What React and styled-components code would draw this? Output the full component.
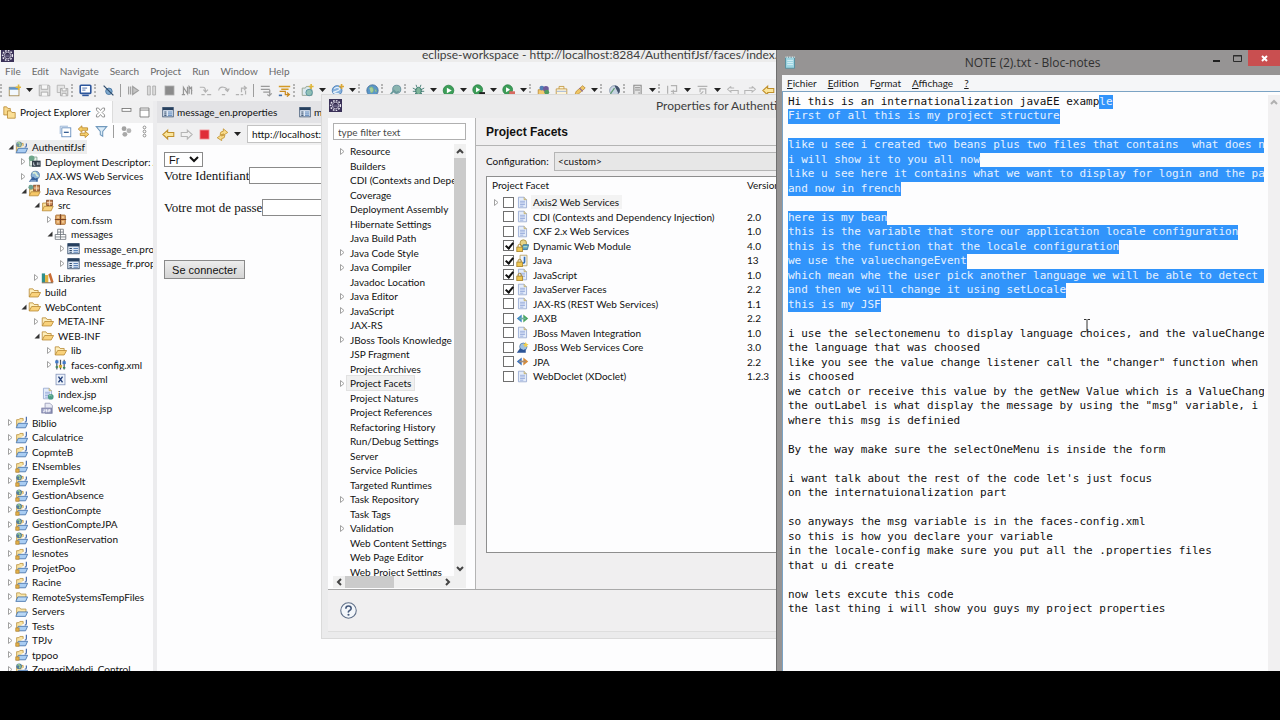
import styled, { createGlobalStyle, css } from "styled-components";

const GlobalStyle = createGlobalStyle`
  * {
    box-sizing: border-box;
  }

  body {
    margin: 0;
    background: #000000;
    font-family: Lato, "Open Sans", sans-serif;
    font-size: 10px;
    color: #111111;
  }

  button,
  input,
  select {
    font-family: inherit;
    font-size: inherit;
    color: inherit;
    margin: 0;
  }
`;

const rowPitch = css`
  height: 14px;
  line-height: 14px;

  &:nth-child(even) {
    height: 15px;
  }
`;

const PageStyled = styled.div`
  min-height: 100vh;
  display: flex;
  flex-direction: column;
  padding: 50px 0 49px;
`;

const DesktopStyled = styled.main`
  flex: 1 1 0;
  min-height: 0;
  display: grid;
  grid-template-columns: minmax(0, 776fr) minmax(0, 504fr);
  grid-template-rows: minmax(0, 1fr);
  overflow: hidden;
`;

/* ---------- icons ---------- */

const IconStyled = styled.svg`
  width: ${({ $size }) => $size || 13}px;
  height: ${({ $size }) => $size || 13}px;
  flex: none;
  display: block;
`;

const page = (
  <>
    <path d="M3 1.500h7l3 3v10H3z" fill="#e4ecfa" stroke="#94a6cf" />
    <path d="M10 1.500v3h3" fill="#f6e7b0" stroke="#b9a76a" />
    <path d="M5 6.500h6M5 8.500h6M5 10.500h6M5 12.500h4" stroke="#8ea4d8" />
  </>
);

const lock = (
  <>
    <path d="M2.500 10V8.500a2 2 0 0 1 4 0V10" fill="none" stroke="#a8842c" strokeWidth="1.200" />
    <rect x="1" y="10" width="7" height="5.500" fill="#efc64f" stroke="#a8842c" />
  </>
);

const projectBase = (
  <>
    <path d="M2 13V4.500h3l1-1.500h4v3" fill="#f8e3a4" stroke="#bd9340" />
    <path d="M1.500 14.500 4 9h11.500l-2.500 5.500z" fill="#a9cdf3" stroke="#3f6ea8" />
  </>
);

const icons = {
  project: (
    <>
      {projectBase}
      <path d="M14 1v4.500q0 2-2 2" fill="none" stroke="#4b6fae" strokeWidth="1.500" />
    </>
  ),
  javaProject: (
    <>
      {projectBase}
      <path d="M14 1v4.500q0 2-2 2" fill="none" stroke="#4b6fae" strokeWidth="1.500" />
      <rect x="1" y="11" width="4" height="4" fill="#e5b34a" stroke="#b98a35" />
    </>
  ),
  webProject: (
    <>
      {projectBase}
      <path d="M14 3v3q0 1.500-2 1.500" fill="none" stroke="#4b6fae" strokeWidth="1.500" />
      <circle cx="5" cy="4" r="3.500" fill="#527d9c" />
      <path d="M3 3q2-2 3 0t-1 3" fill="none" stroke="#9fd08d" strokeWidth="1.500" />
      <rect x="1" y="11" width="4" height="4" fill="#e5b34a" stroke="#b98a35" />
    </>
  ),
  openProject: (
    <>
      {projectBase}
      <path d="M14 3v3q0 1.500-2 1.500" fill="none" stroke="#4b6fae" strokeWidth="1.500" />
      <circle cx="5" cy="4" r="3.500" fill="#6b8f9f" />
      <path d="M3 3q2-2 3 0t-1 3" fill="none" stroke="#a9d69a" strokeWidth="1.500" />
    </>
  ),
  blueFolder: (
    <>
      <path d="M2 13V3.500h4l1 1.500h6.500V9" fill="#fbe7a9" stroke="#b9964b" />
      <path d="M1 14 3.500 8.500H15.500L13 14z" fill="#b9d8f6" stroke="#3f6ea8" />
    </>
  ),
  folder: (
    <>
      <path d="M1.500 13.500v-10h4.500l1.500 2h5v3" fill="#fdeebb" stroke="#b98a35" />
      <path d="M1.500 13.500 4.500 8h11l-3 5.500z" fill="#f9d27c" stroke="#b98a35" />
    </>
  ),
  descriptor: (
    <>
      <path d="M2 2.500h9v11H2z" fill="#e8f2ea" stroke="#7d9c8b" />
      <circle cx="4.500" cy="4" r="3.500" fill="#6fa68a" />
      <rect x="5" y="7" width="10.500" height="7.500" fill="#2f3a46" />
      <path d="M7 9v3.500h2M11.500 9v3.500M13.500 9v3.500" fill="none" stroke="#e6edf2" />
    </>
  ),
  services: (
    <>
      <circle cx="9" cy="6.500" r="5" fill="#8fb6d8" stroke="#4c779f" />
      <path d="M6 4q3-2 4 1t3 2" fill="none" stroke="#d9efd4" strokeWidth="2" />
      <path d="M1 14.500 6 8l3 2.500 3-1v5z" fill="#35619c" />
      <path d="M3 13.500h7" stroke="#dce8f6" />
    </>
  ),
  javaResources: (
    <>
      <path d="M2 14V6h4l1-1h6v4" fill="#fbe2a0" stroke="#b98a35" />
      <path d="M1.500 14.500 4 9.500h11l-2.500 5z" fill="#f6c767" stroke="#b98a35" />
      <rect x="7" y="1.500" width="7" height="7" fill="#c98552" stroke="#7b4423" />
      <path d="M7 5h7M10.500 1.500v7" stroke="#fbe3c6" />
      <circle cx="3.500" cy="4" r="3" fill="#6da18f" />
    </>
  ),
  source: (
    <>
      <path d="M2 14V5h4l1-1.500h6V9" fill="#fbe2a0" stroke="#b98a35" />
      <path d="M1.500 14.500 4 9h11l-2.500 5.500z" fill="#f9d27c" stroke="#b98a35" />
      <rect x="7" y="1.500" width="7" height="6.500" fill="#c98552" stroke="#7b4423" />
      <path d="M7 4.500h7M10.500 1.500V8" stroke="#fbe3c6" />
    </>
  ),
  pack: (
    <>
      <rect x="2" y="2.500" width="12" height="11.500" rx="1" fill="#e3a968" stroke="#a06a35" />
      <path d="M8 1.500v13M1 8h14" stroke="#7b4423" strokeWidth="1.500" />
      <path d="M4 5h2M10 5h2M4 11h2M10 11h2" stroke="#f7dcb5" strokeWidth="1.500" />
    </>
  ),
  emptyPack: (
    <>
      <path d="M4.500 8V1.500h7V8M1.500 8h13v6h-13zM8 1.500V14M1.500 11h13M4.500 5h7" fill="#ffffff" stroke="#6d727a" />
    </>
  ),
  properties: (
    <>
      <rect x="1" y="2" width="14" height="12.500" fill="#dfe9f6" stroke="#2e4766" />
      <rect x="1" y="2" width="14" height="3.500" fill="#27405f" />
      <path d="M3 8h3M3 10.500h3M3 12.500h3" stroke="#2e4766" strokeWidth="1.300" />
      <path d="M8 8h5.500M8 10.500h5.500M8 12.500h5.500" stroke="#5c84b8" strokeWidth="1.300" />
    </>
  ),
  libraries: (
    <>
      <rect x="1" y="3" width="4" height="11" fill="#2f8f8c" />
      <rect x="5" y="5" width="4" height="9" fill="#e0b13c" />
      <path d="m9 4 3-1.500 3.500 11-3 1z" fill="#c96c34" />
      <path d="M1 14.500h14" stroke="#5c4a30" />
    </>
  ),
  config: (
    <>
      <path d="M3.500 2v12M8 2v12M12.500 2v12" stroke="#4a5361" strokeWidth="1.500" />
      <rect x="1.500" y="3" width="4" height="3.500" fill="#3f79c9" />
      <rect x="6" y="8.500" width="4" height="3.500" fill="#d8b135" />
      <rect x="10.500" y="4" width="4" height="3.500" fill="#3f79c9" />
      <path d="M2 11h3M11 12h3" stroke="#3a8b55" strokeWidth="2" />
    </>
  ),
  xml: (
    <>
      <rect x="2.500" y="1.500" width="11" height="13" fill="#eef3fb" stroke="#8495ba" />
      <path d="m5.500 4.500 5 7M10.500 4.500l-5 7" stroke="#27437c" strokeWidth="1.800" />
    </>
  ),
  indexPage: (
    <>
      {page}
      <circle cx="12" cy="12" r="3.500" fill="#4c9c86" />
      <path d="M10 11q2-2 3 0" fill="none" stroke="#bfe3c9" />
    </>
  ),
  jspPage: (
    <>
      <path d="M5 7V1.500h6l3 3V14H5" fill="#e8eaf4" stroke="#9498b5" />
      <rect x="1" y="7.500" width="12" height="6" fill="#a7aacb" stroke="#73779f" />
      <path d="M4 9v3H2.500M7.500 9.500H6v1h1.500v1.500H6M9.500 12.500V9.500H11V11H9.500" fill="none" stroke="#ffffff" />
    </>
  ),
  page,
  lockedPage: (
    <>
      {page}
      {lock}
    </>
  ),
  lockedWeb: (
    <>
      <circle cx="9" cy="5" r="4" fill="#e9d486" stroke="#a58d3d" />
      <path d="M7 11 9 7h6.500L14 13H7z" fill="#5ea1c4" stroke="#35708f" />
      <path d="M9 9.500h5" stroke="#b6e0bd" strokeWidth="1.500" />
      {lock}
    </>
  ),
  lockedJava: (
    <>
      <path d="M5 1.500h8.500v13H5z" fill="#eff4fc" stroke="#b59c55" />
      <path d="M10.500 3.500v6q0 2-2.500 1.500" fill="none" stroke="#2f6bb5" strokeWidth="2" />
      {lock}
    </>
  ),
  jaxb: (
    <>
      <path d="M7 3v10L1 8z" fill="#3f86c6" />
      <path d="M9 3v10L15 8z" fill="#47a45b" />
      <path d="M4 8h8" stroke="#6fb0a0" strokeWidth="2" />
    </>
  ),
  jpa: (
    <>
      <path d="M7 3v10L1 8z" fill="#3c72ba" />
      <path d="M9 3v10L15 8z" fill="#d98a35" />
      <path d="M4 8h8" stroke="#a58f7a" strokeWidth="2" />
    </>
  ),
  boss: (
    <>
      <circle cx="9" cy="7" r="4.500" fill="#9fc1e0" stroke="#5a83ad" />
      <path d="M1 14.500 5 9l4 2 3-1v4.500z" fill="#2c5497" />
      <path d="m12 1 1 2.500 2.500.5-2 1.500.5 2.500-2-1.500-2 1.500.5-2.500-2-1.500 2.500-.5z" fill="#f2cf4a" />
    </>
  ),
  explorer: (
    <>
      <path d="M1 11V1h3.500l1.500 2H9v8z" fill="#f8d98c" stroke="#b98a35" />
      <path d="M5.500 15V6h4l1.500 2h4v7z" fill="#fbdf96" stroke="#b98a35" />
    </>
  ),
  eclipse: (
    <>
      <rect width="16" height="16" fill="#3a3158" />
      <circle cx="8" cy="8" r="6" fill="none" stroke="#e9e6f0" strokeWidth="1.800" strokeDasharray="2 1.500" />
      <circle cx="8" cy="8" r="4" fill="#2a2145" stroke="#d6d2e2" />
      <path d="M5 7.500h6M5 9.500h6" stroke="#8d86aa" />
    </>
  ),
  newWizard: (
    <>
      <rect x="1.500" y="4" width="12" height="10.500" fill="#f3f8fd" stroke="#a08448" />
      <rect x="1.500" y="4" width="11" height="3" fill="#5f95c9" />
      <path d="M13 .5v7M9.500 4h6.500" stroke="#e0b73c" strokeWidth="2" />
    </>
  ),
  save: (
    <>
      <path d="M1.500 1.500h12l1 1v12h-13z" fill="#e1e1e1" stroke="#a3a3a3" />
      <path d="M4 1.500v5h8v-5M4 14.500V10h8v4.500" fill="#f7f7f7" stroke="#a3a3a3" />
    </>
  ),
  saveAll: (
    <>
      <path d="M1.500 1.500h9v9h-9z" fill="#e6e6e6" stroke="#b0b0b0" />
      <path d="M5.500 5.500h9v9h-9z" fill="#e1e1e1" stroke="#a3a3a3" />
      <path d="M7.500 5.500v3h5v-3M7.500 14.500v-3h5v3" fill="#f7f7f7" stroke="#a3a3a3" />
    </>
  ),
  console: (
    <>
      <rect x="1.500" y="1.500" width="13" height="10" rx="1" fill="#ffffff" stroke="#2d569c" strokeWidth="2" />
      <path d="M4 5h6M4 7.500h4" stroke="#2d569c" />
      <path d="M4 14h8" stroke="#2d569c" strokeWidth="2" />
    </>
  ),
  skip: (
    <>
      <circle cx="8.500" cy="9" r="4" fill="#7fa9ce" stroke="#3f6f9c" />
      <path d="m2 2 12 12" stroke="#2f4c6b" strokeWidth="1.500" />
    </>
  ),
  resume: <path d="M2 3v10M4.500 3v10M7 3l7 5-7 5z" fill="#c4c4c4" stroke="#a0a0a0" strokeWidth="1.500" />,
  pause: <path d="M3 2.500h3.500v11H3zM9.500 2.500H13v11H9.500z" fill="#dcdcdc" stroke="#a8a8a8" />,
  stop: <rect x="2.500" y="2.500" width="11" height="11" fill="#8b8b8b" stroke="#a9a9a9" />,
  disconnect: <path d="M3 13V4l5 8V3.500M10 12V3l4 5M13 3v10M1 13h4" fill="none" stroke="#979797" strokeWidth="1.500" />,
  stepInto: <path d="M1 4h4q3 0 3 5M5.500 7 8 10l3-3M3 13h4M10 13h5" fill="none" stroke="#b2b2b2" strokeWidth="1.500" />,
  stepOver: <path d="M2 8q1-5 6-4t5 4M10 6.500 13 9l2-3.500M6 13h4" fill="none" stroke="#b2b2b2" strokeWidth="1.500" />,
  stepReturn: <path d="M1 13h4M7 13h3M8 10V5h5M11 2.500 14 5l-3 2.500M13 8v5" fill="none" stroke="#b2b2b2" strokeWidth="1.500" />,
  lines: <path d="M1 3h11M1 6.500h11M4 10h8M9 13l3 2M12 7v7l2.500-2.500" fill="none" stroke="#9a9a9a" strokeWidth="1.500" />,
  filters: (
    <>
      <path d="M1 3h14M4 6.500h9" stroke="#d49a26" strokeWidth="2" />
      <path d="M2 9h7v4h4M11 10.500l3 2.500-3 2.500" fill="none" stroke="#c98a20" strokeWidth="1.500" />
      <path d="M1 14h4" stroke="#3f6fae" strokeWidth="2" />
    </>
  ),
  newWeb: (
    <>
      <path d="M1.500 14V5h4l1-2h5v4h2v7z" fill="#dce9ee" stroke="#8d9c88" />
      <circle cx="10" cy="10.500" r="4" fill="#8fc0b5" stroke="#4f8a9b" />
      <path d="M12.500 0v6M9.500 3h6" stroke="#e0b73c" strokeWidth="2" />
    </>
  ),
  newService: (
    <>
      <circle cx="7.500" cy="8" r="6" fill="#86b1dc" stroke="#4177b4" />
      <path d="M4 6q3-3 6-1T6 9t4 3" fill="none" stroke="#e8f2fb" strokeWidth="1.500" />
      <path d="M13 0v6M10 3h6" stroke="#dba736" strokeWidth="2" />
    </>
  ),
  globe: (
    <>
      <circle cx="8" cy="8" r="7" fill="#5b97c9" stroke="#456f97" />
      <path d="M4 5q4-3 5 1t-3 5M11 6q3 2 1 4" fill="#a8cf9a" stroke="#7fb376" />
    </>
  ),
  webSearch: (
    <>
      <circle cx="9.500" cy="6.500" r="5" fill="#8ab5b0" stroke="#5c8898" />
      <path d="m1 14 5-6 3 3 3-2" fill="none" stroke="#6a9a9b" strokeWidth="2" />
    </>
  ),
  debug: (
    <>
      <ellipse cx="8" cy="8.500" rx="3.500" ry="4.500" fill="#7fb59a" stroke="#2f6f65" />
      <path d="M1 5l4 2M1 9h4M2 14l3-3M15 5l-4 2M15 9h-4M14 14l-3-3M6 4 5 1M10 4l1-3" stroke="#2f6f65" />
    </>
  ),
  run: (
    <>
      <circle cx="8" cy="8" r="6.500" fill="#3c9e58" stroke="#2a8145" />
      <path d="M6 4.500v7L12 8z" fill="#ffffff" />
    </>
  ),
  coverage: (
    <>
      <circle cx="7" cy="7" r="6" fill="#3c9e58" stroke="#2a8145" />
      <path d="M5 4v6l5-3z" fill="#ffffff" />
      <rect x="9" y="10" width="7" height="2.500" fill="#1f1f1f" />
    </>
  ),
  external: (
    <>
      <circle cx="7" cy="7" r="6" fill="#3c9e58" stroke="#2a8145" />
      <path d="M5 4v6l5-3z" fill="#ffffff" />
      <rect x="9" y="9" width="7" height="5" fill="#d86a60" />
    </>
  ),
  team: (
    <>
      <path d="M1.500 14V7h5l1-2h5v9z" fill="#f4c96f" stroke="#b98a35" />
      <circle cx="6" cy="5" r="3" fill="#527fb6" />
      <circle cx="11" cy="6" r="3.500" fill="#6e5a9c" />
      <circle cx="12" cy="10" r="3" fill="#4f9a5f" />
    </>
  ),
  bag: (
    <>
      <path d="M1.500 6h13v8h-13zM5 6V3h6v3" fill="#fdf4da" stroke="#c09238" />
      <path d="M2 9h12" stroke="#8aa6d8" />
    </>
  ),
  pencil: (
    <>
      <path d="m2 14 2-5 8-7 3 3-8 7z" fill="#f0c766" stroke="#b98a35" />
      <path d="m8 5 4 4" stroke="#8a6a9b" strokeWidth="1.500" />
    </>
  ),
  open: (
    <>
      <circle cx="8" cy="8" r="6" fill="#c7d3e2" stroke="#7d8fa8" />
      <path d="M8 2a6 6 0 0 1 5 10z" fill="#44546d" />
      <path d="M3 12 8 5" stroke="#5b9a6c" strokeWidth="1.500" />
    </>
  ),
  server: <path d="M3.500 1.500h9v13h-9zM5 4.500h6M5 7.500h6M9 11h2" fill="#e3e3e3" stroke="#8d8d8d" strokeWidth="1.300" />,
  nextMark: <path d="M2 2v10M6 2h7v7H6M9 7v7M6.500 12 9 14.500 11.500 12" fill="none" stroke="#b2b2b2" strokeWidth="1.500" />,
  prevMark: <path d="M2 3h12M12 14V6H6M4 14l5-5M9 6 5 6v4" fill="none" stroke="#b2b2b2" strokeWidth="1.500" />,
  backGrey: <path d="M6 3 2 6.500 6 10V8h9v5M6 3v2h4" fill="none" stroke="#b5b5b5" strokeWidth="1.300" />,
  nextGrey: <path d="m10 3 4 3.500-4 3.500V8H1v5M10 3v2H6" fill="none" stroke="#b5b5b5" strokeWidth="1.300" />,
  back: <path d="M7 2.500 1 8l6 5.500V10.500h7.500v-5H7z" fill="#fbe59b" stroke="#c0902c" strokeWidth="1.300" />,
  forward: <path d="m9 2.500 6 5.500-6 5.500V10.500H1.500v-5H9z" fill="#f1f1f1" stroke="#b5b5b5" strokeWidth="1.300" />,
  redStop: <rect x="2.500" y="2.500" width="11" height="11" fill="#e02d38" stroke="#ef8288" />,
  refresh: (
    <>
      <path d="M5 8q0-4 4-4V1l5.500 4.500L9 9V7Q8 7 8 9z" fill="#f9dc8c" stroke="#c0902c" />
      <path d="M11 9q0 4-4 4v2.500L1.500 12 7 8v2q1 0 1-1z" fill="#f9dc8c" stroke="#c0902c" />
    </>
  ),
  collapse: (
    <>
      <path d="M1.500 11V1.500H11" fill="none" stroke="#86a8cf" />
      <rect x="3.500" y="3.500" width="11" height="11" fill="#ffffff" stroke="#5884b8" />
      <path d="M6 9h6" stroke="#27528a" strokeWidth="1.500" />
    </>
  ),
  link: (
    <>
      <path d="M6 1 1.500 5 6 9V6.500h7v-3H6z" fill="#f6cf69" stroke="#b98425" />
      <path d="m10 7.500 4.500 4L10 15.500V13H4v-3h6z" fill="#f6cf69" stroke="#b98425" />
    </>
  ),
  funnel: <path d="M1.500 2h13L9.500 8v6l-3-2V8z" fill="#dcecf8" stroke="#7199bd" strokeWidth="1.300" />,
  focus: (
    <>
      <circle cx="5" cy="4.500" r="3" fill="#a2a2a2" />
      <circle cx="11" cy="7" r="3" fill="#b5b5b5" />
      <circle cx="6" cy="11.500" r="3" fill="#a9a9a9" />
    </>
  ),
  more: (
    <>
      <circle cx="8" cy="3" r="1.700" fill="#ffffff" stroke="#7b7b7b" />
      <circle cx="8" cy="8" r="1.700" fill="#ffffff" stroke="#7b7b7b" />
      <circle cx="8" cy="13" r="1.700" fill="#ffffff" stroke="#7b7b7b" />
    </>
  ),
  closeTab: <path d="M3 2.500h2.500L8 5.500l2.500-3H13v2.500L10 8l3 3v2.500h-2.500L8 10.500l-2.500 3H3V11l3-3-3-3z" fill="#ffffff" stroke="#7d7d7d" />,
  minimize: <rect x="2.500" y="3" width="11" height="3.500" fill="#ffffff" stroke="#6d6d6d" />,
  maximize: <path d="M2.500 2.500h11v11h-11zM2.500 5h11" fill="#ffffff" stroke="#6d6d6d" />,
  notepad: (
    <>
      <rect x="2" y="2" width="11" height="13" fill="#9fd6e3" stroke="#4d8a9b" />
      <path d="M2 1.500h11" stroke="#e9f6f8" strokeWidth="2" strokeDasharray="1 1" />
      <path d="M4 5.500h7M4 8h7M4 10.500h7" stroke="#dcf3f7" />
    </>
  ),
  help: (
    <>
      <circle cx="8" cy="8" r="7.300" fill="#f3f6fa" stroke="#5f6f88" />
      <path d="M5.500 6.300q0-2.500 2.500-2.500t2.500 2.200q0 1.200-1.500 2T8 10" fill="none" stroke="#44587a" strokeWidth="1.500" />
      <circle cx="8" cy="12" r="1" fill="#44587a" />
    </>
  ),
};

const Icon = ({ name, size }) => (
  <IconStyled viewBox="0 0 16 16" $size={size} aria-hidden="true">
    {icons[name]}
  </IconStyled>
);

const TwistyStyled = styled.span`
  width: 9px;
  flex: none;
  display: flex;
  align-items: center;
  justify-content: center;
`;

const Twisty = ({ state }) => (
  <TwistyStyled>
    {state === "closed" && (
      <svg width="5" height="7" viewBox="0 0 5 7">
        <path d="M.5.5 4 3.500.5 6.500z" fill="#ffffff" stroke="#a2a2a2" />
      </svg>
    )}
    {state === "open" && (
      <svg width="6" height="6" viewBox="0 0 6 6">
        <path d="M5.500.5v5h-5z" fill="#333333" />
      </svg>
    )}
  </TwistyStyled>
);

/* ---------- workbench ---------- */

const WorkbenchStyled = styled.section`
  position: relative;
  display: flex;
  flex-direction: column;
  min-width: 0;
  background: #ececee;
  overflow: hidden;
`;

const WorkbenchTitleStyled = styled.header`
  height: 12px;
  flex: none;
  display: flex;
  align-items: flex-end;
  background: #ececec;
  overflow: hidden;
`;

const AppIconStyled = styled.span`
  width: 422px;
  padding-left: 1px;
  flex: none;
`;

const WindowTitleStyled = styled.h1`
  margin: 0;
  font-size: 12px;
  line-height: 14px;
  font-weight: 400;
  color: #3d3d3d;
  white-space: nowrap;
`;

const MenuBarStyled = styled.nav`
  display: flex;
  align-items: center;
  gap: 11px;
  height: ${({ $height }) => $height}px;
  flex: none;
  padding: 0 5px;
  background: #f5f6f8;
  color: ${({ $color }) => $color};
`;

const MenuButtonStyled = styled.button`
  border: 0;
  padding: 0;
  background: none;
  line-height: 14px;
`;

const ToolBarStyled = styled.div`
  display: flex;
  align-items: center;
  height: 22px;
  flex: none;
  background: #f1f1f2;
  overflow: hidden;
`;

const ToolButtonStyled = styled.button`
  width: ${({ $width }) => $width || 18}px;
  height: 18px;
  flex: none;
  border: 0;
  padding: 0;
  background: none;
  display: flex;
  align-items: center;
  justify-content: center;
`;

const GripStyled = styled.span`
  width: 5px;
  height: 13px;
  flex: none;
  border-left: 2px dotted #b4b4b4;
`;

const SeparatorStyled = styled.span`
  width: 1px;
  height: 13px;
  margin: 0 3px;
  flex: none;
  background: #9d9d9d;
`;

const WorkAreaStyled = styled.div`
  flex: 1;
  min-height: 0;
  display: flex;
  gap: 4px;
`;

const ExplorerStyled = styled.aside`
  width: 153px;
  flex: none;
  display: flex;
  flex-direction: column;
  background: #fdfdfe;
  overflow: hidden;
`;

const TabStripStyled = styled.div`
  height: 22px;
  flex: none;
  display: flex;
  align-items: center;
  background: ${({ $background }) => $background};
  white-space: nowrap;
  overflow: hidden;
`;

const ViewTabStyled = styled.div`
  height: 100%;
  display: flex;
  align-items: center;
  gap: 4px;
  padding: 0 5px 0 3px;
  background: #fdfdfe;
  border-right: 1px solid #dcdcdc;
`;

const ViewControlsStyled = styled.div`
  flex: 1;
  display: flex;
  justify-content: flex-end;
`;

const ViewToolBarStyled = styled.div`
  height: 17px;
  flex: none;
  display: flex;
  align-items: center;
  justify-content: flex-end;
`;

const TreeStyled = styled.ul`
  margin: 0;
  padding: 0;
  list-style: none;
  flex: 1;
  min-height: 0;
  overflow: hidden;
`;

const TreeItemStyled = styled.li`
  ${rowPitch}
  display: flex;
  align-items: center;
  padding-left: ${({ $level }) => 6 + $level * 13}px;
  white-space: nowrap;
`;

const TreeLabelStyled = styled.span`
  display: flex;
  align-items: center;
  gap: 4px;
  padding-right: 2px;
  background: ${({ $selected }) => ($selected ? "#ededed" : "none")};
`;

const EditorStyled = styled.section`
  flex: 1;
  min-width: 0;
  display: flex;
  flex-direction: column;
  background: #fdfdfe;
`;

const EditorTabStyled = styled.div`
  display: flex;
  align-items: center;
  gap: 3px;
  flex: none;
  width: 137px;
  padding-left: 5px;
`;

const BrowserBarStyled = styled.div`
  height: 22px;
  flex: none;
  display: flex;
  align-items: center;
  padding-left: 2px;
  background: #f0f0f1;
`;

const AddressStyled = styled.input`
  flex: 1;
  min-width: 0;
  height: 18px;
  margin-left: 4px;
  border: 1px solid #c3c3c3;
  padding: 0 4px;
  background: #ffffff;
`;

const FormStyled = styled.form`
  display: flex;
  flex-direction: column;
  align-items: flex-start;
  padding: 7px 0 0 7px;
  font-family: "Liberation Serif", serif;
  font-size: 13px;
  overflow: hidden;
`;

const LanguageSelectStyled = styled.select`
  width: 39px;
  height: 15px;
  padding: 0;
  border: 1px solid #8a8a8a;
  background: #ffffff;
  font-family: "Liberation Sans", sans-serif;
  font-size: 11px;
`;

const FieldStyled = styled.div`
  display: flex;
  align-items: center;
  height: 17px;
  margin-bottom: ${({ $gap }) => $gap}px;

  input {
    width: 130px;
    height: 17px;
    border: 1px solid #8a8a8a;
    background: #ffffff;
  }
`;

const SubmitStyled = styled.button`
  width: 81px;
  height: 19px;
  padding: 0;
  border: 1px solid #8a8a8a;
  background: linear-gradient(#ededed, #d4d4d4);
  font-family: "Liberation Sans", sans-serif;
  font-size: 11px;
`;

/* ---------- properties dialog, floats over the workbench ---------- */

const DialogStyled = styled.section`
  position: absolute;
  top: 44px;
  right: 0;
  bottom: 32px;
  left: 321px;
  display: flex;
  flex-direction: column;
  padding: 0 0 6px 6px;
  background: #ebebec;
  border: solid #dadada;
  border-width: 1px 0 1px 1px;
  overflow: hidden;
`;

const DialogTitleStyled = styled.header`
  height: 23px;
  flex: none;
  display: flex;
  align-items: center;
  padding: 0 0 2px 1px;

  h2 {
    margin: 0 0 0 314px;
    font-size: 12px;
    line-height: 16px;
    font-weight: 400;
    color: #3d3d3d;
    white-space: nowrap;
  }
`;

const DialogBodyStyled = styled.div`
  flex: 1;
  min-height: 0;
  display: flex;
  background: #f0eff0;
  border-bottom: 1px solid #a9a9a9;
`;

const CategoriesStyled = styled.div`
  width: 148px;
  flex: none;
  display: flex;
  flex-direction: column;
  padding: 5px 9px 1px 5px;
  border-right: 1px solid #b4b4b4;
  background: #fdfdfe;
`;

const FilterStyled = styled.input`
  width: 100%;
  height: 17px;
  flex: none;
  padding: 0 4px;
  border: 1px solid #b0b0b0;
  background: #ffffff;

  &::placeholder {
    color: #4a4a4a;
  }
`;

const CategoryAreaStyled = styled.div`
  flex: 1;
  min-height: 0;
  display: flex;
  margin-top: 4px;
`;

const CategoryListStyled = styled.div`
  flex: 1;
  min-width: 0;
  display: flex;
  flex-direction: column;
`;

const CategoryStyled = styled.li`
  ${rowPitch}
  display: flex;
  align-items: center;
  padding-left: 5px;
  white-space: nowrap;

  span:last-child {
    padding: 0 3px;
    background: ${({ $selected }) => ($selected ? "#f0f0f0" : "none")};
    outline: ${({ $selected }) => ($selected ? "1px solid #e2e2e2" : "none")};
  }
`;

const VerticalScrollStyled = styled.div`
  width: 12px;
  flex: none;
  display: flex;
  flex-direction: column;
  align-items: center;
  background: ${({ $background }) => $background || "#f0f0f0"};
  padding-bottom: ${({ $end }) => $end || 0}px;
`;

const HorizontalScrollStyled = styled.div`
  height: 12px;
  flex: none;
  display: flex;
  align-items: center;
  background: #f0f0f0;
`;

const ScrollThumbStyled = styled.span`
  background: #cbcbcb;
  flex: ${({ $grow }) => $grow};
  align-self: stretch;
`;

const ScrollTrackStyled = styled.span`
  flex: ${({ $grow }) => $grow};
`;

const ScrollButtonStyled = styled.button`
  width: 12px;
  height: 14px;
  flex: none;
  border: 0;
  padding: 0;
  background: none;
  display: flex;
  align-items: center;
  justify-content: center;
`;

const arrows = {
  up: "m1 6 3-3 3 3",
  down: "m1 2 3 3 3-3",
  left: "M6 1 3 4l3 3",
  right: "m2 1 3 3-3 3",
};

const ScrollButton = ({ direction, color = "#444444" }) => (
  <ScrollButtonStyled type="button" aria-label={`Scroll ${direction}`}>
    <svg width="8" height="8" viewBox="0 0 8 8">
      <path d={arrows[direction]} fill="none" stroke={color} strokeWidth="2" />
    </svg>
  </ScrollButtonStyled>
);

const FacetsStyled = styled.div`
  flex: 1;
  min-width: 0;
  display: flex;
  flex-direction: column;

  h3 {
    margin: 0;
    height: 28px;
    flex: none;
    padding-left: 10px;
    border-bottom: 1px solid #b4b4b4;
    font-family: "Liberation Sans", sans-serif;
    font-size: 12px;
    line-height: 28px;
    color: #111111;
  }
`;

const ConfigurationStyled = styled.div`
  display: flex;
  align-items: center;
  height: 30px;
  flex: none;
  padding-left: 10px;

  label {
    width: 68px;
    flex: none;
  }

  select {
    flex: 1;
    min-width: 0;
    height: 19px;
    appearance: none;
    padding: 0 3px;
    border: 1px solid #b5b5b5;
    border-right: 0;
    border-radius: 0;
    background: #e7e7e7;
  }
`;

const FacetBoxStyled = styled.div`
  flex: 1;
  min-height: 0;
  margin: 0 0 36px 10px;
  border: 1px solid #8e8e8e;
  border-right: 0;
  background: #fdfdfe;
  overflow: hidden;
`;

const FacetTableStyled = styled.table`
  width: 100%;
  table-layout: fixed;
  border-collapse: collapse;

  th {
    height: 18px;
    padding: 0 0 2px 5px;
    font-weight: 400;
    text-align: left;
  }

  th:last-child {
    width: 34px;
  }

  td {
    padding: 0 0 0 5px;
    white-space: nowrap;
  }
`;

const FacetRowStyled = styled.tr`
  ${rowPitch}
`;

const FacetCellStyled = styled.div`
  height: 14px;
  display: flex;
  align-items: center;
  gap: 2px;

  label {
    padding: 0 3px 0 2px;
    background: ${({ $selected }) => ($selected ? "#f3f3f3" : "none")};
  }
`;

const CheckboxStyled = styled.input`
  appearance: none;
  position: relative;
  width: 11px;
  height: 11px;
  flex: none;
  border: 1px solid #6f6f6f;
  background: #ffffff;

  &:checked::after {
    content: "";
    position: absolute;
    left: 3px;
    top: 0;
    width: 3px;
    height: 6px;
    border: solid #111111;
    border-width: 0 2px 2px 0;
    transform: rotate(40deg);
  }
`;

const DialogFooterStyled = styled.footer`
  height: 42px;
  flex: none;
  display: flex;
  align-items: center;
  padding-left: 11px;
  background: #f0eff0;
  border-bottom: 1px solid #dedede;
`;

/* ---------- notepad ---------- */

const NotepadStyled = styled.section`
  position: relative;
  display: flex;
  flex-direction: column;
  min-width: 0;
  padding-left: 5px;
  background: #969494;
  border-left: 1px solid #6f6f6f;
  overflow: hidden;
`;

const NotepadTitleStyled = styled.header`
  height: 25px;
  flex: none;
  display: flex;
  align-items: center;
  padding-left: 2px;

  h2 {
    flex: 1;
    margin: 0;
    padding-left: 62px;
    font-family: "Open Sans", sans-serif;
    font-size: 12px;
    line-height: 16px;
    font-weight: 400;
    color: #303030;
    text-align: center;
  }
`;

const WindowButtonStyled = styled.button`
  width: ${({ $width }) => $width}px;
  height: 16px;
  align-self: flex-start;
  border: 0;
  padding: 0;
  display: flex;
  align-items: center;
  justify-content: center;
  background: ${({ $danger }) => ($danger ? "#c94f50" : "none")};
`;

const NotepadBodyStyled = styled.div`
  flex: 1;
  min-height: 0;
  display: flex;
  gap: 4px;
  padding: 3px 0 0 5px;
  background: #fdfdfe;
  border-top: 1px solid #7ba3c4;
  border-left: 1px solid #7ba3c4;
`;

const NoteStyled = styled.div`
  flex: 1;
  min-width: 0;
  overflow: hidden;
  font-family: "DejaVu Sans Mono", monospace;
  font-size: 11px;
  white-space: pre;
`;

const NoteLineStyled = styled.div`
  ${rowPitch}

  mark {
    display: inline-block;
    height: 100%;
    background: #3194fb;
    color: #e6f1ff;
  }
`;

const CursorStyled = styled.svg`
  position: absolute;
  top: 269px;
  left: 306px;
`;

/* ---------- content ---------- */

const menus = ["File", "Edit", "Navigate", "Search", "Project", "Run", "Window", "Help"];

const tools = [
  "|", "newWizard", "v", "save", "saveAll", "|", "console", "|", "skip", "/",
  "resume", "pause", "stop", "disconnect", "stepInto", "stepOver", "stepReturn", "/",
  "lines", "filters", "|", "newWeb", "v", "newService", "v", "|", "globe", "|",
  "webSearch", "|", "debug", "v", "run", "v", "coverage", "v", "external", "v", "|",
  "team", "bag", "pencil", "v", "|", "open", "|", "server", "v", "|",
  "nextMark", "v", "prevMark", "v", "backGrey", "nextGrey", "back",
];

const tree = [
  [0, "open", "openProject", "AuthentifJsf"],
  [1, "closed", "descriptor", "Deployment Descriptor: AuthentifJsf"],
  [1, "closed", "services", "JAX-WS Web Services"],
  [1, "open", "javaResources", "Java Resources"],
  [2, "open", "source", "src"],
  [3, "closed", "pack", "com.fssm"],
  [3, "open", "emptyPack", "messages"],
  [4, "closed", "properties", "message_en.properties"],
  [4, "closed", "properties", "message_fr.properties"],
  [2, "closed", "libraries", "Libraries"],
  [1, "", "folder", "build"],
  [1, "open", "folder", "WebContent"],
  [2, "closed", "folder", "META-INF"],
  [2, "open", "folder", "WEB-INF"],
  [3, "closed", "folder", "lib"],
  [3, "closed", "config", "faces-config.xml"],
  [3, "", "xml", "web.xml"],
  [2, "", "indexPage", "index.jsp"],
  [2, "", "jspPage", "welcome.jsp"],
  [0, "closed", "project", "Biblio"],
  [0, "closed", "project", "Calculatrice"],
  [0, "closed", "project", "CopmteB"],
  [0, "closed", "javaProject", "ENsembles"],
  [0, "closed", "webProject", "ExempleSvlt"],
  [0, "closed", "webProject", "GestionAbsence"],
  [0, "closed", "webProject", "GestionCompte"],
  [0, "closed", "webProject", "GestionCompteJPA"],
  [0, "closed", "webProject", "GestionReservation"],
  [0, "closed", "javaProject", "lesnotes"],
  [0, "closed", "javaProject", "ProjetPoo"],
  [0, "closed", "javaProject", "Racine"],
  [0, "closed", "blueFolder", "RemoteSystemsTempFiles"],
  [0, "closed", "blueFolder", "Servers"],
  [0, "closed", "javaProject", "Tests"],
  [0, "closed", "javaProject", "TPJv"],
  [0, "closed", "javaProject", "tppoo"],
  [0, "closed", "webProject", "ZougariMehdi_Control"],
];

const categories = [
  "+Resource", "Builders", "CDI (Contexts and Dependency Injection)", "Coverage",
  "Deployment Assembly", "Hibernate Settings", "Java Build Path", "+Java Code Style",
  "+Java Compiler", "Javadoc Location", "+Java Editor", "+JavaScript", "JAX-RS",
  "+JBoss Tools Knowledge Base", "JSP Fragment", "Project Archives", "+Project Facets",
  "Project Natures", "Project References", "Refactoring History", "Run/Debug Settings",
  "Server", "Service Policies", "Targeted Runtimes", "+Task Repository", "Task Tags",
  "+Validation", "Web Content Settings", "Web Page Editor", "Web Project Settings",
];

const facets = [
  ["Axis2 Web Services", "", false, "page"],
  ["CDI (Contexts and Dependency Injection)", "2.0", false, "page"],
  ["CXF 2.x Web Services", "1.0", false, "page"],
  ["Dynamic Web Module", "4.0", true, "lockedWeb"],
  ["Java", "13", true, "lockedJava"],
  ["JavaScript", "1.0", true, "lockedPage"],
  ["JavaServer Faces", "2.2", true, "page"],
  ["JAX-RS (REST Web Services)", "1.1", false, "page"],
  ["JAXB", "2.2", false, "jaxb"],
  ["JBoss Maven Integration", "1.0", false, "page"],
  ["JBoss Web Services Core", "3.0", false, "boss"],
  ["JPA", "2.2", false, "jpa"],
  ["WebDoclet (XDoclet)", "1.2.3", false, "page"],
];

const selectedLines = [
  "First of all this is my project structure",
  "",
  "like u see i created two beans plus two files that contains  what does need",
  "i will show it to you all now",
  "like u see here it contains what we want to display for login and the password",
  "and now in french",
  "",
  "here is my bean",
  "this is the variable that store our application locale configuration",
  "this is the function that the locale configuration",
  "we use the valuechangeEvent",
  "which mean whe the user pick another language we will be able to detect what",
  "and then we will change it using setLocale",
  "this is my JSF",
];

const plainLines = [
  "",
  "i use the selectonemenu to display language choices, and the valueChangeListener",
  "the language that was choosed",
  'like you see the value change listener call the "changer" function when a value',
  "is choosed",
  "we catch or receive this value by the getNew Value which is a ValueChangeEvent",
  'the outLabel is what display the message by using the "msg" variable, i i will',
  "where this msg is definied",
  "",
  "By the way make sure the selectOneMenu is inside the form",
  "",
  "i want talk about the rest of the code let's just focus",
  "on the internatuionalization part",
  "",
  "so anyways the msg variable is in the faces-config.xml",
  "so this is how you declare your variable",
  "in the locale-config make sure you put all the .properties files",
  "that u di create",
  "",
  "now lets excute this code",
  "the last thing i will show you guys my project properties",
];

const Caret = () => (
  <svg width="7" height="4" viewBox="0 0 7 4">
    <path d="M0 0h7L3.500 4z" fill="#222222" />
  </svg>
);

const ToolItem = ({ name }) => {
  if (name === "|") return <GripStyled />;
  if (name === "/") return <SeparatorStyled />;
  if (name === "v") {
    return (
      <ToolButtonStyled type="button" $width={12} aria-label="More">
        <Caret />
      </ToolButtonStyled>
    );
  }
  return (
    <ToolButtonStyled type="button" aria-label={name}>
      <Icon name={name} />
    </ToolButtonStyled>
  );
};

const ProjectExplorer = () => (
  <ExplorerStyled>
    <TabStripStyled $background="#f0f0f1">
      <ViewTabStyled>
        <Icon name="explorer" />
        <span>Project Explorer</span>
        <Icon name="closeTab" />
      </ViewTabStyled>
      <ViewControlsStyled>
        <ToolItem name="minimize" />
        <ToolItem name="maximize" />
      </ViewControlsStyled>
    </TabStripStyled>
    <ViewToolBarStyled>
      <ToolItem name="collapse" />
      <ToolItem name="link" />
      <ToolItem name="funnel" />
      <SeparatorStyled />
      <ToolItem name="focus" />
      <ToolItem name="more" />
    </ViewToolBarStyled>
    <TreeStyled>
      {tree.map(([level, state, icon, label]) => (
        <TreeItemStyled key={label} $level={level}>
          <Twisty state={state} />
          <TreeLabelStyled $selected={label === "AuthentifJsf"}>
            <Icon name={icon} />
            {label}
          </TreeLabelStyled>
        </TreeItemStyled>
      ))}
    </TreeStyled>
  </ExplorerStyled>
);

const Editor = () => (
  <EditorStyled>
    <TabStripStyled $background="#e3e3e6">
      <EditorTabStyled>
        <Icon name="properties" size={12} />
        message_en.properties
      </EditorTabStyled>
      <EditorTabStyled>
        <Icon name="properties" size={12} />
        message_fr.properties
      </EditorTabStyled>
    </TabStripStyled>
    <BrowserBarStyled>
      <ToolItem name="back" />
      <ToolItem name="forward" />
      <ToolItem name="redStop" />
      <ToolItem name="refresh" />
      <ToolItem name="v" />
      <AddressStyled
        aria-label="Address"
        defaultValue="http://localhost:8284/AuthentifJsf/faces/index.jsp"
      />
    </BrowserBarStyled>
    <FormStyled onSubmit={(event) => event.preventDefault()}>
      <LanguageSelectStyled aria-label="Langue" defaultValue="Fr">
        <option>Fr</option>
        <option>En</option>
      </LanguageSelectStyled>
      <FieldStyled $gap={15}>
        <label htmlFor="login">Votre Identifiant</label>
        <input id="login" />
      </FieldStyled>
      <FieldStyled $gap={44}>
        <label htmlFor="password">Votre mot de passe</label>
        <input id="password" type="password" />
      </FieldStyled>
      <SubmitStyled type="submit">Se connecter</SubmitStyled>
    </FormStyled>
  </EditorStyled>
);

const Categories = () => (
  <CategoriesStyled>
    <FilterStyled aria-label="Filter" placeholder="type filter text" />
    <CategoryAreaStyled>
      <CategoryListStyled>
        <TreeStyled>
          {categories.map((name) => (
            <CategoryStyled key={name} $selected={name === "+Project Facets"}>
              <Twisty state={name[0] === "+" ? "closed" : ""} />
              <span>{name.replace("+", "")}</span>
            </CategoryStyled>
          ))}
        </TreeStyled>
        <HorizontalScrollStyled>
          <ScrollButton direction="left" />
          <ScrollThumbStyled $grow={1} />
          <ScrollTrackStyled $grow={1} />
          <ScrollButton direction="right" />
        </HorizontalScrollStyled>
      </CategoryListStyled>
      <VerticalScrollStyled $end={12}>
        <ScrollButton direction="up" />
        <ScrollThumbStyled $grow={10} />
        <ScrollTrackStyled $grow={1} />
        <ScrollButton direction="down" />
      </VerticalScrollStyled>
    </CategoryAreaStyled>
  </CategoriesStyled>
);

const Facets = () => (
  <FacetsStyled>
    <h3>Project Facets</h3>
    <ConfigurationStyled>
      <label htmlFor="configuration">Configuration:</label>
      <select id="configuration">
        <option>&lt;custom&gt;</option>
      </select>
    </ConfigurationStyled>
    <FacetBoxStyled>
      <FacetTableStyled>
        <thead>
          <tr>
            <th>Project Facet</th>
            <th>Version</th>
          </tr>
        </thead>
        <tbody>
          {facets.map(([name, version, checked, icon], index) => (
            <FacetRowStyled key={name}>
              <td>
                <FacetCellStyled $selected={index === 0}>
                  <Twisty state={index === 0 ? "closed" : ""} />
                  <CheckboxStyled id={`facet-${index}`} type="checkbox" defaultChecked={checked} />
                  <Icon name={icon} />
                  <label htmlFor={`facet-${index}`}>{name}</label>
                </FacetCellStyled>
              </td>
              <td>{version}</td>
            </FacetRowStyled>
          ))}
        </tbody>
      </FacetTableStyled>
    </FacetBoxStyled>
  </FacetsStyled>
);

const PropertiesDialog = () => (
  <DialogStyled>
    <DialogTitleStyled>
      <Icon name="eclipse" />
      <h2>Properties for AuthentifJsf</h2>
    </DialogTitleStyled>
    <DialogBodyStyled>
      <Categories />
      <Facets />
    </DialogBodyStyled>
    <DialogFooterStyled>
      <ToolButtonStyled type="button" aria-label="Help">
        <Icon name="help" size={17} />
      </ToolButtonStyled>
    </DialogFooterStyled>
  </DialogStyled>
);

const Workbench = () => (
  <WorkbenchStyled>
    <WorkbenchTitleStyled>
      <AppIconStyled>
        <Icon name="eclipse" />
      </AppIconStyled>
      <WindowTitleStyled>
        eclipse-workspace - http://localhost:8284/AuthentifJsf/faces/index.jsp
      </WindowTitleStyled>
    </WorkbenchTitleStyled>
    <MenuBarStyled $height={17} $color="#6a6a6a">
      {menus.map((name) => (
        <MenuButtonStyled type="button" key={name}>
          {name}
        </MenuButtonStyled>
      ))}
    </MenuBarStyled>
    <ToolBarStyled>
      {tools.map((name, index) => (
        <ToolItem key={index} name={name} />
      ))}
    </ToolBarStyled>
    <WorkAreaStyled>
      <ProjectExplorer />
      <Editor />
    </WorkAreaStyled>
    <PropertiesDialog />
  </WorkbenchStyled>
);

const Notepad = () => (
  <NotepadStyled>
    <NotepadTitleStyled>
      <Icon name="notepad" />
      <h2>NOTE (2).txt - Bloc-notes</h2>
      <WindowButtonStyled type="button" $width={21} aria-label="Minimize">
        <svg width="7" height="8" viewBox="0 0 7 8">
          <path d="M0 7h7" stroke="#1f1f1f" strokeWidth="2" />
        </svg>
      </WindowButtonStyled>
      <WindowButtonStyled type="button" $width={21} aria-label="Maximize">
        <svg width="9" height="7" viewBox="0 0 9 7">
          <path d="M.5.5h8v6h-8zM0 1h9" fill="none" stroke="#2c2c2c" />
        </svg>
      </WindowButtonStyled>
      <WindowButtonStyled type="button" $width={32} $danger aria-label="Close">
        <svg width="7" height="7" viewBox="0 0 7 7">
          <path d="m1 1 5 5M6 1 1 6" stroke="#ffffff" strokeWidth="2" />
        </svg>
      </WindowButtonStyled>
    </NotepadTitleStyled>
    <MenuBarStyled $height={16} $color="#1c1c1c">
      <MenuButtonStyled type="button"><u>F</u>ichier</MenuButtonStyled>
      <MenuButtonStyled type="button"><u>E</u>dition</MenuButtonStyled>
      <MenuButtonStyled type="button">F<u>o</u>rmat</MenuButtonStyled>
      <MenuButtonStyled type="button"><u>A</u>ffichage</MenuButtonStyled>
      <MenuButtonStyled type="button"><u>?</u></MenuButtonStyled>
    </MenuBarStyled>
    <NotepadBodyStyled>
      <NoteStyled>
        <NoteLineStyled>
          Hi this is an internationalization javaEE examp<mark>le</mark>
        </NoteLineStyled>
        {selectedLines.map((line, index) => (
          <NoteLineStyled key={index}>{line && <mark>{line}</mark>}</NoteLineStyled>
        ))}
        {plainLines.map((line, index) => (
          <NoteLineStyled key={index}>{line}</NoteLineStyled>
        ))}
      </NoteStyled>
      <VerticalScrollStyled $background="#f1f0f1">
        <ScrollButton direction="up" color="#b0b0b0" />
      </VerticalScrollStyled>
    </NotepadBodyStyled>
    <CursorStyled width="8" height="13" viewBox="0 0 8 13">
      <path d="M1 .5h2.500M4.500.5H7M4 1v11M1 12.500h2.500M4.500 12.500H7" stroke="#333333" />
    </CursorStyled>
  </NotepadStyled>
);

const App = () => (
  <PageStyled>
    <GlobalStyle />
    <DesktopStyled>
      <Workbench />
      <Notepad />
    </DesktopStyled>
  </PageStyled>
);

export default App;
